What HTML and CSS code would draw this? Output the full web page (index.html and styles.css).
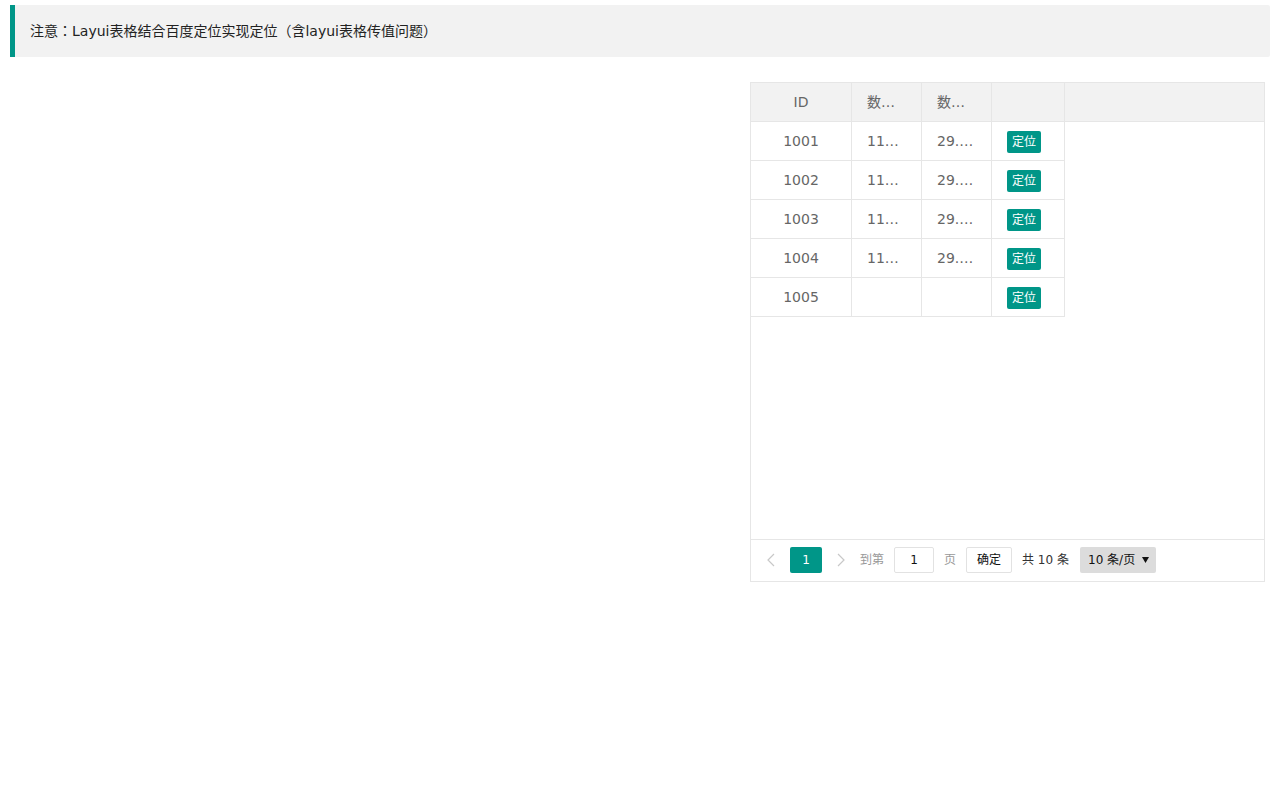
FILE: index.html
```html
<!DOCTYPE html>
<html>
<head>
<meta charset="utf-8">
<title>Layui表格结合百度定位</title>
<link rel="stylesheet" href="styles.css">
</head>
<body>
<blockquote class="quote">注意：Layui表格结合百度定位实现定位（含layui表格传值问题）</blockquote>
<div class="row">
  <div class="col-map"><div class="map"></div></div>
  <div class="col-table">
    <div class="table-view">
      <div class="thead">
        <table class="grid">
          <tr>
            <th class="c1 center">ID</th>
            <th class="c2">数据经度</th>
            <th class="c3">数据纬度</th>
            <th class="c4"></th>
          </tr>
        </table>
      </div>
      <div class="tbody">
        <table class="grid">
          <tr><td class="c1 center">1001</td><td class="c2">116.404177</td><td class="c3">29.915927</td><td class="c4"><span class="btn">定位</span></td></tr>
          <tr><td class="c1 center">1002</td><td class="c2">116.417591</td><td class="c3">29.921436</td><td class="c4"><span class="btn">定位</span></td></tr>
          <tr><td class="c1 center">1003</td><td class="c2">116.398264</td><td class="c3">29.908351</td><td class="c4"><span class="btn">定位</span></td></tr>
          <tr><td class="c1 center">1004</td><td class="c2">116.425518</td><td class="c3">29.932064</td><td class="c4"><span class="btn">定位</span></td></tr>
          <tr><td class="c1 center">1005</td><td class="c2"></td><td class="c3"></td><td class="c4"><span class="btn">定位</span></td></tr>
        </table>
      </div>
      <div class="page">
        <span class="arrow"><svg width="8" height="14" viewBox="0 0 8 14"><polyline points="7,1 1,7 7,13" fill="none" stroke="#c8c8c8" stroke-width="1.2"/></svg></span>
        <span class="cur">1</span>
        <span class="arrow"><svg width="8" height="14" viewBox="0 0 8 14"><polyline points="1,1 7,7 1,13" fill="none" stroke="#c8c8c8" stroke-width="1.2"/></svg></span>
        <span class="lbl">到第</span>
        <span class="input">1</span>
        <span class="lbl">页</span>
        <span class="ok">确定</span>
        <span class="count">共 10 条</span>
        <span class="limit">10 条/页<svg class="tri" width="7" height="6" viewBox="0 0 7 6"><polygon points="0,0 7,0 3.5,6" fill="#111"/></svg></span>
      </div>
    </div>
  </div>
</div>
</body>
</html>
```

FILE: styles.css
```css
html, body {
  margin: 0;
  background: #fff;
}
body {
  padding: 5px 10px;
  font-family: "DejaVu Sans", "Noto Sans CJK JP", sans-serif;
  font-size: 14px;
  color: #666;
  text-spacing-trim: space-all;
}
.quote {
  margin: 0 0 10px 0;
  padding: 15px;
  line-height: 22px;
  border-left: 5px solid #009688;
  border-radius: 0 2px 2px 0;
  background: #f2f2f2;
  color: #222;
  font-size: 14px;
}
.row {
  display: flex;
}
.col-map {
  width: 735px;
  flex: none;
}
.col-table {
  width: 525px;
  flex: none;
  padding: 15px 5px 5px;
  box-sizing: border-box;
}
.table-view {
  height: 500px;
  box-sizing: border-box;
  border: 1px solid #e6e6e6;
  display: flex;
  flex-direction: column;
}
.thead {
  background: #f2f2f2;
  border-bottom: 1px solid #e6e6e6;
}
.tbody {
  flex: 1;
  background: #fff;
}
.grid {
  border-collapse: separate;
  border-spacing: 0;
  table-layout: fixed;
  width: 314px;
}
.grid th, .grid td {
  box-sizing: border-box;
  padding: 0 15px;
  line-height: 38px;
  height: 38px;
  font-weight: normal;
  text-align: left;
  color: #666;
  white-space: nowrap;
  overflow: hidden;
  text-overflow: ellipsis;
  border-right: 1px solid #e6e6e6;
}
.grid td {
  border-bottom: 1px solid #e6e6e6;
  height: 39px;
}
.grid .center { text-align: center; }
.c1 { width: 101px; }
.c2 { width: 70px; }
.c3 { width: 70px; }
.c4 { width: 73px; }
.btn {
  display: inline-block;
  vertical-align: middle;
  height: 22px;
  line-height: 22px;
  padding: 0 5px;
  font-size: 12px;
  color: #fff;
  background: #009688;
  border-radius: 2px;
}
.page {
  border-top: 1px solid #e6e6e6;
  padding: 7px 7px 0;
  box-sizing: border-box;
  height: 42px;
  display: flex;
  align-items: flex-start;
  font-size: 12px;
}
.page > span {
  height: 26px;
  line-height: 26px;
  flex: none;
}
.arrow {
  width: 26px;
  display: flex;
  align-items: center;
  justify-content: center;
  margin-right: 6px;
}
.cur {
  width: 32px;
  text-align: center;
  background: #009688;
  color: #fff;
  border-radius: 2px;
  margin-right: 6px;
}
.lbl {
  color: #999;
  margin-right: 10px;
}
.input {
  width: 40px;
  box-sizing: border-box;
  border: 1px solid #e2e2e2;
  border-radius: 2px;
  text-align: center;
  color: #111;
  line-height: 24px !important;
  margin-right: 10px;
}
.ok {
  width: 46px;
  box-sizing: border-box;
  border: 1px solid #e2e2e2;
  border-radius: 2px;
  text-align: center;
  color: #111;
  background: #fff;
  line-height: 24px !important;
  margin-right: 10px;
}
.count {
  color: #333;
  min-width: 48px;
  margin-right: 10px;
}
.limit {
  width: 76px;
  box-sizing: border-box;
  padding-left: 8px;
  background: #dcdcdc;
  border-radius: 2px;
  color: #111;
  display: flex;
  align-items: center;
}
.tri {
  margin-left: 7px;
}
```
